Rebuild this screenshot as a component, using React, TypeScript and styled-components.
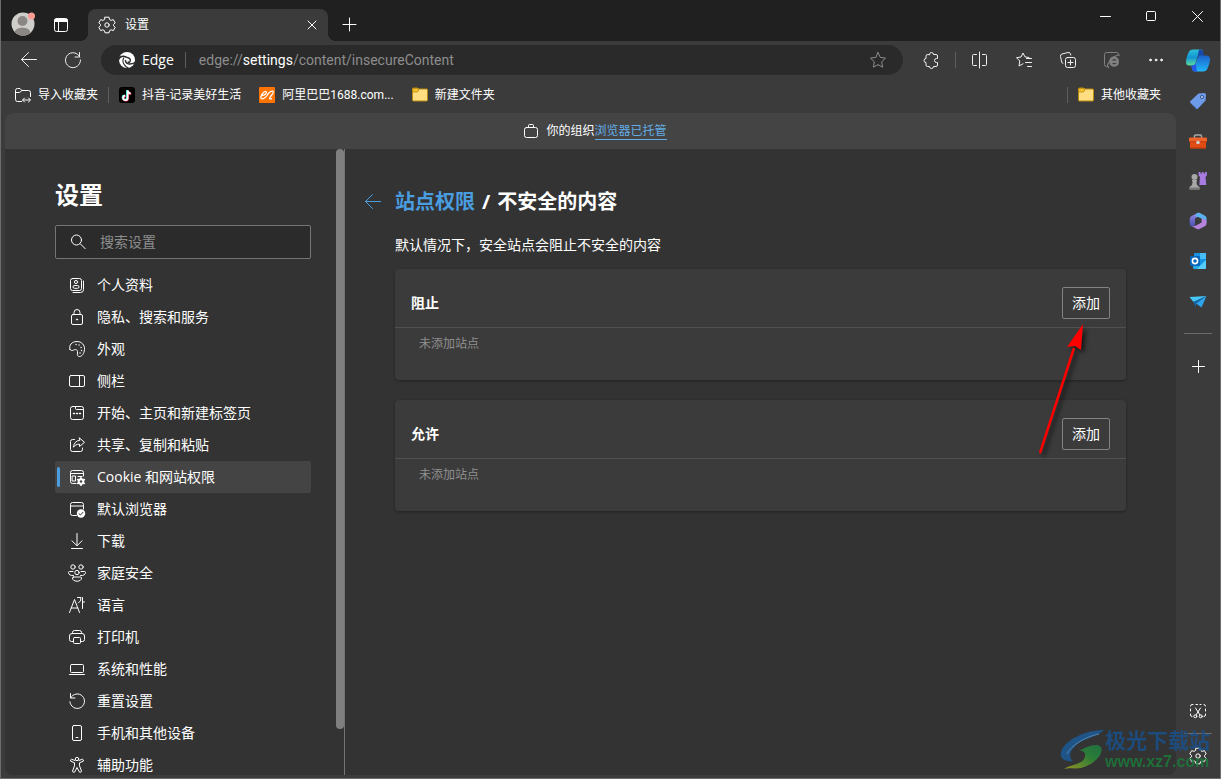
import React from "react";
import styled, { createGlobalStyle, css } from "styled-components";

const GlobalStyle = createGlobalStyle`
  *, *::before, *::after { box-sizing: border-box; }
  body {
    margin: 0;
    background: #202020;
    color: #fff;
    font-family: "Open Sans", "Noto Sans CJK SC", sans-serif;
    font-size: 14px;
    line-height: 20px;
  }
  button, input { font: inherit; color: inherit; }
  button { background: none; border: 0; padding: 0; cursor: pointer; }
  a { color: inherit; text-decoration: none; }
`;

/* ---------- window frame ---------- */

const Window = styled.div`
  position: relative;
  display: flex;
  flex-direction: column;
  height: 100vh;
  border: solid #6c6c6c;
  border-width: 0 1px 1px;
  background: #3b3b3b;
  overflow: hidden;
`;

const TitleBar = styled.header`
  display: flex;
  flex: none;
  height: 41px;
  padding-left: 3px;
  background: #202020;
`;

const TitleButton = styled.button`
  display: grid;
  place-items: center;
  width: 38px;
  height: 32px;
  margin-top: 8px;
`;

const Tab = styled.div`
  position: relative;
  display: flex;
  align-items: center;
  width: 240px;
  margin: 9px 2px 0 8px;
  padding: 0 8px 0 10px;
  border-radius: 8px 8px 0 0;
  background: #3b3b3b;
  font-size: 12px;

  &::before,
  &::after {
    content: "";
    position: absolute;
    bottom: 0;
    width: 8px;
    height: 8px;
  }
  &::before {
    right: 100%;
    background: radial-gradient(circle at 0 0, transparent 8px, #3b3b3b 8px);
  }
  &::after {
    left: 100%;
    background: radial-gradient(circle at 100% 0, transparent 8px, #3b3b3b 8px);
  }
`;

const TabTitle = styled.span`
  flex: 1;
  padding-left: 9px;
`;

const TabClose = styled.button`
  display: grid;
  place-items: center;
  width: 16px;
  height: 16px;
`;

const WindowControls = styled.div`
  display: flex;
  margin-left: auto;
`;

const ControlButton = styled.button`
  display: grid;
  place-items: center;
  width: 46px;
  height: 32px;
`;

const Body = styled.div`
  display: flex;
  flex: 1;
  min-height: 0;
`;

const Main = styled.div`
  display: flex;
  flex-direction: column;
  flex: 1;
  min-width: 0;
`;

/* ---------- toolbar ---------- */

const Toolbar = styled.div`
  display: flex;
  align-items: center;
  flex: none;
  gap: 4px;
  height: 38px;
  padding-left: 8px;
`;

const ToolButton = styled.button<{ $dim?: boolean }>`
  display: grid;
  place-items: center;
  flex: none;
  width: 40px;
  height: 32px;
  color: ${(p) => (p.$dim ? "#808080" : "#f0f0f0")};
`;

const Divider = styled.span`
  flex: none;
  width: 1px;
  height: 16px;
  background: #5e5e5e;
`;

const AddressBar = styled.div`
  display: flex;
  align-items: center;
  flex: 1;
  min-width: 0;
  height: 30px;
  margin: 0 4px;
  padding: 0 16px 0 18px;
  border-radius: 15px;
  background: #2a2a2a;
`;

const SiteChip = styled.button`
  display: flex;
  align-items: center;
  gap: 7px;
  margin-right: 11px;
`;

const Url = styled.div`
  flex: 1;
  min-width: 0;
  padding-left: 13px;
  color: #8d8d8d;
  font-family: Roboto, "Noto Sans CJK SC", sans-serif;
  white-space: nowrap;
  outline: none;

  b {
    color: #fff;
    font-weight: 400;
  }
`;

const StarButton = styled.button`
  display: grid;
  color: #8d8d8d;
`;

/* ---------- bookmarks ---------- */

const BookmarkBar = styled.nav`
  display: flex;
  align-items: center;
  flex: none;
  gap: 2px;
  height: 32px;
  margin-bottom: 2px;
  padding: 0 7px 0 6px;
  font-family: Roboto, "Noto Sans CJK SC", sans-serif;
  font-size: 12px;
`;

const Bookmark = styled.a`
  display: flex;
  align-items: center;
  gap: 7px;
  padding: 0 8px;
  white-space: nowrap;
`;

const BookmarkSpacer = styled.span`
  flex: 1;
`;

/* ---------- settings page ---------- */

const Page = styled.div`
  display: flex;
  flex-direction: column;
  flex: 1;
  min-height: 0;
  margin: 0 0 3px 4px;
  border-radius: 8px;
  background: #333;
  overflow: hidden;
`;

const ManagedBar = styled.div`
  display: flex;
  align-items: center;
  justify-content: center;
  flex: none;
  gap: 7px;
  height: 36px;
  padding-left: 9px;
  background: #444;
  font-size: 12px;
`;

const ManagedLink = styled.a`
  border-bottom: 1px solid #63ace5;
  color: #63ace5;
  line-height: 16px;
`;

const ManagedText = styled.span`
  line-height: 16px;
`;

const Columns = styled.div`
  display: flex;
  flex: 1;
  min-height: 0;
`;

const Aside = styled.aside`
  display: flex;
  flex: none;
  width: 340px;
  border-right: 1px solid #757575;
  overflow: hidden;
`;

const AsideContent = styled.div`
  flex: 1;
  padding: 28px 25px 0 50px;
`;

const ScrollThumb = styled.div`
  width: 8px;
  height: calc(100% - 46px);
  border-radius: 4px;
  background: #7f7f7f;
`;

const SettingsTitle = styled.h1`
  margin: 0 0 12px;
  font-size: 24px;
  font-weight: 700;
  line-height: 36px;
`;

const SearchBox = styled.label`
  display: flex;
  align-items: center;
  gap: 14px;
  height: 34px;
  margin-bottom: 10px;
  padding: 0 14px;
  border: 1px solid #757575;
  border-radius: 2px;
  background: #2b2b2b;

  input {
    flex: 1;
    min-width: 0;
    padding: 0;
    border: 0;
    outline: 0;
    background: none;
  }
  input::placeholder {
    color: #8d8d8d;
    opacity: 1;
  }
`;

const NavList = styled.ul`
  margin: 0;
  padding: 0;
  list-style: none;
`;

const NavLink = styled.a<{ $active?: boolean }>`
  position: relative;
  display: flex;
  align-items: center;
  gap: 11px;
  height: 32px;
  padding-left: 13px;
  border-radius: 2px;
  white-space: nowrap;

  ${(p) =>
    p.$active &&
    css`
      background: #444;
      &::before {
        content: "";
        position: absolute;
        left: 2px;
        top: 6px;
        width: 3px;
        height: 20px;
        border-radius: 2px;
        background: #4a9ee0;
      }
    `}
`;

const Section = styled.main`
  position: relative;
  flex: 1;
  min-width: 0;
  padding: 39px 50px 0;
`;

const Heading = styled.div`
  display: flex;
  align-items: center;
  gap: 14px;
  margin-left: -30px;

  h2 {
    display: flex;
    gap: 7px;
    margin: 0;
    font-size: 20px;
    font-weight: 700;
    line-height: 28px;
  }
`;

const BlueLink = styled.a`
  display: inline-flex;
  color: #4a9ee0;
`;

const Description = styled.p`
  margin: 19px 0 14px;
`;

const Card = styled.section`
  height: 111px;
  margin-bottom: 20px;
  border-radius: 4px;
  background: #3b3b3b;
  box-shadow: 0 1px 3px rgba(0, 0, 0, 0.35);
`;

const CardHeader = styled.div`
  display: flex;
  align-items: center;
  justify-content: space-between;
  padding: 18px 16px 8px;
  border-bottom: 1px solid #505050;

  h3 {
    margin: 0;
    font-size: 14px;
    font-weight: 700;
  }
`;

const AddButton = styled.button`
  width: 48px;
  height: 32px;
  border: 1px solid #838383;
  border-radius: 2px;
`;

const EmptyText = styled.p`
  margin: 0;
  padding: 6px 24px;
  color: #909090;
  font-size: 12px;
`;

const Pointer = styled.svg`
  position: absolute;
  top: 171px;
  right: 84px;
  filter: drop-shadow(3px 3px 2px rgba(0, 0, 0, 0.6));
  pointer-events: none;
`;

/* ---------- right sidebar ---------- */

const Rail = styled.nav`
  display: flex;
  flex-direction: column;
  align-items: center;
  flex: none;
  width: 44px;
  padding-bottom: 2px;
`;

const RailButton = styled.button`
  display: grid;
  place-items: center;
  flex: none;
  width: 40px;
  height: 40px;
`;

const RailRule = styled.span<{ $gap: number }>`
  flex: none;
  width: 28px;
  height: 1px;
  margin: ${(p) => p.$gap}px 0;
  background: #6b6b6b;
`;

const RailSpacer = styled.span`
  flex: 1;
`;

const Watermark = styled.div`
  position: absolute;
  right: 10px;
  bottom: 6px;
  display: flex;
  align-items: center;
  opacity: 0.85;
  pointer-events: none;
`;

const WatermarkText = styled.div`
  color: #19508a;
  font-size: 21px;
  font-weight: 700;
  line-height: 24px;

  span {
    display: block;
    color: #1b7a3a;
    font-family: "Liberation Sans", sans-serif;
    font-size: 16px;
    line-height: 20px;
  }
`;

/* ---------- icons ---------- */

type IconProps = { size?: number; children: React.ReactNode };

const Icon = ({ size = 18, children }: IconProps) => (
  <svg
    width={size}
    height={size}
    viewBox={`0 0 ${size} ${size}`}
    fill="none"
    stroke="currentColor"
    strokeLinecap="round"
    strokeLinejoin="round"
    aria-hidden="true"
  >
    {children}
  </svg>
);

const GearIcon = () => (
  <Icon>
    <path d="M7 1.200h4l.6 2.400 1.500.8 2.200-.8 1.900 3.300-1.700 1.600v1.200l1.700 1.600-1.900 3.300-2.200-.8-1.500.8-.6 2.200H7l-.6-2.200-1.500-.8-2.200.8-1.900-3.300 1.700-1.600V8.500L.8 6.900l1.900-3.300 2.200.8 1.500-.8z" />
    <circle cx="9" cy="9" r="2.200" />
  </Icon>
);

const BackIcon = () => (
  <Icon>
    <path d="M16.500 8.500H1.500M8.500 1.500l-7 7 7 7" />
  </Icon>
);

const FolderIcon = () => (
  <Icon size={16}>
    <path d="M.5 13V2Q.5 1 1.500 1h4l1 1h8q1 0 1 1v10q0 1-1 1h-13q-1 0-1-1z" fill="#ffdd80" stroke="#b98a10" />
    <path d="M1 1.500h5.500V4L5 5H1z" fill="#f5c22e" stroke="#b98a10" strokeWidth=".8" />
  </Icon>
);

const navItems: { label: string; icon: React.ReactNode; active?: boolean }[] = [
  {
    label: "个人资料",
    icon: (
      <>
        <rect x="2.500" y="2.500" width="11" height="12" rx="2" />
        <path d="M15.500 5v8.500q0 3-3 3H5" />
        <circle cx="8" cy="6" r="1.600" />
        <rect x="5" y="9.500" width="6" height="2.800" rx="1.400" />
      </>
    ),
  },
  {
    label: "隐私、搜索和服务",
    icon: (
      <>
        <rect x="3.500" y="6.500" width="11" height="10" rx="1.500" />
        <path d="M6 6.500V4.500a3 3 0 0 1 6 0v2" />
        <circle cx="9" cy="11.500" r=".6" fill="currentColor" />
      </>
    ),
  },
  {
    label: "外观",
    icon: (
      <>
        <path d="M2 9.500C.5 5 4 1.500 9 1.500c4.500 0 8 3.500 7.500 8-.4 4-2.500 7-5 7-2 0-2.300-1.500-2-3.500.3-2.200-.5-3.500-2-3.500-1.700 0-3.500 2.500-5.500 0z" />
        <path d="M8 4.500h.1M11 5h.1M13 7.500h.1M13.500 10.500h.1M12 13h.1" strokeWidth="1.300" />
      </>
    ),
  },
  {
    label: "侧栏",
    icon: (
      <>
        <rect x="1.500" y="3.500" width="15" height="11" rx="1.500" />
        <path d="M11.500 3.500v11" />
      </>
    ),
  },
  {
    label: "开始、主页和新建标签页",
    icon: (
      <>
        <rect x="2.500" y="2.500" width="13" height="13" rx="2" />
        <path d="M7.500 2.500v2q0 1 1 1h7" />
        <path d="M5.500 9.500h1M8.500 9.500h1M11.500 9.500h1" strokeWidth="1.400" />
      </>
    ),
  },
  {
    label: "共享、复制和粘贴",
    icon: (
      <>
        <path d="M6.500 3.500h-2q-2 0-2 2v8q0 2 2 2h8q2 0 2-2v-1.500" />
        <path d="M11.500 2l5 4.300-5 4.200V8.200c-3 0-4.500.8-6 3 .3-4 2.500-6.500 6-6.900z" />
      </>
    ),
  },
  {
    label: "Cookie 和网站权限",
    active: true,
    icon: (
      <>
        <path d="M8 15.500H4.500q-2 0-2-2v-9q0-2 2-2h9q2 0 2 2V8M2.500 5.500h13M4.500 8h3v5h-3zM10 8.500h4" />
        <circle cx="13" cy="13.500" r="3.300" fill="currentColor" stroke="none" />
        <path d="M13 9.800v7.400M9.800 11.600l6.400 3.800M16.200 11.600l-6.400 3.800" strokeWidth="1.800" />
        <circle cx="13" cy="13.500" r="1.200" fill="#444" stroke="none" />
      </>
    ),
  },
  {
    label: "默认浏览器",
    icon: (
      <>
        <path d="M8.500 15.500h-4q-2 0-2-2v-9q0-2 2-2h9q2 0 2 2V9M2.500 6h13" />
        <circle cx="13" cy="13.500" r="4.200" fill="currentColor" stroke="none" />
        <path d="M11 13.700l1.400 1.300 2.600-2.700" stroke="#333" />
      </>
    ),
  },
  {
    label: "下载",
    icon: <path d="M9 1.500v12M4 8.800l5 5 5-5M3.500 16.500h11" />,
  },
  {
    label: "家庭安全",
    icon: (
      <>
        <circle cx="5" cy="3" r="2.200" />
        <circle cx="13" cy="3" r="2.200" />
        <circle cx="9" cy="8.500" r="2.200" />
        <path d="M5.500 11.500C2.500 12 .5 10.500.5 8.500q0-1 1-1h3.500M12.500 11.500c3 .5 5-1 5-3q0-1-1-1H13M5.500 13h7q1 0 1 1c0 2-1.800 3.200-4.500 3.200s-4.500-1.200-4.500-3.200q0-1 1-1z" />
      </>
    ),
  },
  {
    label: "语言",
    icon: <path d="M1.500 16.500l5-13 5 13M3.200 12h6.600M9.500 1.500h3.500q.2 4-2.500 5.500M14.500 1.500v11M14.500 6h2" />,
  },
  {
    label: "打印机",
    icon: (
      <>
        <path d="M5.500 13.500h-2q-2 0-2-2V8q0-2.500 2.500-2.500h10q2.500 0 2.500 2.500v3.500q0 2-2 2h-2" />
        <path d="M4.500 5.500v-1q0-2 2-2h5q2 0 2 2v1" />
        <rect x="5.500" y="9.500" width="7" height="6" rx="1" />
      </>
    ),
  },
  {
    label: "系统和性能",
    icon: (
      <>
        <rect x="2.500" y="4.500" width="13" height="8" rx="1" />
        <path d="M1.500 14.500h15" />
      </>
    ),
  },
  {
    label: "重置设置",
    icon: <path d="M2.500 1.500v4.500h4.500M2.700 5.800a7.300 7.300 0 1 1-.8 4" />,
  },
  {
    label: "手机和其他设备",
    icon: (
      <>
        <rect x="4.500" y="1.500" width="9" height="15" rx="1.500" />
        <path d="M8 13.500h2" />
      </>
    ),
  },
  {
    label: "辅助功能",
    icon: (
      <>
        <circle cx="9" cy="3" r="1.700" />
        <path d="M7 4.500L3.500 3.200q-1.500.5-.8 2l3.800 1.600v3L4.500 15q.5 2 2 1.200L9 11.500l2.500 4.700q1.500.8 2-1.200l-2-5.200v-3l3.800-1.600q.7-1.500-.8-2L11 4.500" />
      </>
    ),
  },
];

const siteLists = ["阻止", "允许"];

const railApps: { label: string; icon: React.ReactNode }[] = [
  {
    label: "Copilot",
    icon: (
      <svg width="24" height="24" viewBox="0 0 24 24" aria-hidden="true">
        <defs>
          <linearGradient id="cpl" x1="0" y1="0" x2="0" y2="1">
            <stop offset="0" stopColor="#2cc0d8" />
            <stop offset=".5" stopColor="#1194d3" />
            <stop offset="1" stopColor="#5fdc98" />
          </linearGradient>
          <linearGradient id="cpr" x1="0" y1="0" x2="0" y2="1">
            <stop offset="0" stopColor="#1b62ca" />
            <stop offset="1" stopColor="#22b6fa" />
          </linearGradient>
        </defs>
        <path d="M7 .5h8q2 0 2 2l-1 4h-2q-2 0-2.600 2L9.500 14.500q-.8 2-3 2H3.500Q0 16.500 0 13C0 9.500 2 4.500 3 2.500q1-2 4-2z" fill="url(#cpl)" />
        <path d="M13 .5h2q1.500 0 2.200 2.500L18.200 6.500H14q-2 0-2.600 2z" fill="#1747a8" />
        <path d="M17 22.500H9q-2.500 0-3-3l-.7-3h1.200q2.200 0 3-2l2.500-6q.6-2 2.600-2H20q4 0 4 4c0 3.500-2 8-3 10q-1 2-4 2z" fill="url(#cpr)" />
        <path d="M11 22.500H9q-2.500 0-3-3l-.7-3h1.200q2.200 0 3-2z" fill="#2457e6" />
      </svg>
    ),
  },
  {
    label: "购物",
    icon: (
      <svg width="18" height="18" viewBox="0 0 18 18" aria-hidden="true">
        <path d="M9.500 1.500L15 1q2 0 2 2l-.5 5.500L9 16.500q-1 1-2 0L1.500 11q-1-1 0-2z" fill="#6d9bea" />
        <path d="M1.500 11l7 5.800q-.8.4-1.500-.3z" fill="#4577cc" />
        <circle cx="13" cy="5" r="1.500" fill="#dce9ff" stroke="#294b85" />
      </svg>
    ),
  },
  {
    label: "工具",
    icon: (
      <svg width="18" height="18" viewBox="0 0 18 18" aria-hidden="true">
        <path d="M5.500 6V4q0-1 1-1h5q1 0 1 1v2" fill="none" stroke="#a9a9a9" strokeWidth="1.400" />
        <rect y="5.500" width="18" height="4.500" rx="1" fill="#f0642c" />
        <path d="M1 10h16v5.500q0 1-1 1H2q-1 0-1-1z" fill="#e04c14" />
        <path d="M0 9.200h18v1H0zM1 15.500h16v1H1z" fill="#b83a0c" />
        <circle cx="9" cy="10.500" r="1.800" fill="#d0d0d0" />
      </svg>
    ),
  },
  {
    label: "游戏",
    icon: (
      <svg width="18" height="18" viewBox="0 0 18 18" aria-hidden="true">
        <path d="M9.500 0h2v1.500h1.300V0h1.800v1.500h1.300V0h2v3.500L16.500 5l.8 8h-7l.7-8-1.500-1.500z" fill="#a77be0" />
        <circle cx="5.500" cy="5" r="3" fill="#a7a7a7" />
        <path d="M3 8h5v1.500H7.300L8 13l2.500 2v2.500H.5V15L3 13l.7-3.500H3z" fill="#a7a7a7" />
        <path d="M.5 15.500h10v2H.5z" fill="#777" />
      </svg>
    ),
  },
  {
    label: "Microsoft 365",
    icon: (
      <svg width="18" height="18" viewBox="0 0 18 18" aria-hidden="true">
        <defs>
          <linearGradient id="m365" x1="0" y1="0" x2="0" y2="1">
            <stop offset="0" stopColor="#9a8be6" />
            <stop offset="1" stopColor="#4a4fae" />
          </linearGradient>
        </defs>
        <path d="M9.500.5L2.500 4Q.7 5 .7 6.800V12q.3 2.500 3 2.500 2 0 2.300-1V6.500L11 3.500z" fill="url(#m365)" />
        <path d="M7.500 1.500Q9.500.2 11 1l5 2.700q1.500.9 1.500 2.600v4.500L12.500 9V6.500L6 4z" fill="#5bb2ee" />
        <path d="M17.500 9.500v2.200q0 1.500-1.300 2.300L10.500 17q-1.300.7-2.600 0L2.500 14q3 .5 5-.8l5-3V6.700q5 0 5 2.800z" fill="#b583dc" />
        <path d="M6 7l3.200-1.800L12.500 7v3.300L9 12.300 6 10.500z" fill="#3b3b3b" />
      </svg>
    ),
  },
  {
    label: "Outlook",
    icon: (
      <svg width="18" height="18" viewBox="0 0 18 18" aria-hidden="true">
        <rect x="5" y="1" width="12" height="13" rx="1" fill="#1793e6" />
        <path d="M11 1h6v6h-6z" fill="#46bdf6" />
        <path d="M4 9l7 4 6-5v8q0 1-1 1H5q-1 0-1-1z" fill="#28a8ea" />
        <path d="M17 8v8q0 1-1 1H8z" fill="#57cdfb" />
        <rect x="1" y="4" width="10" height="10" rx="1" fill="#0766b8" />
        <circle cx="6" cy="9" r="2.600" fill="none" stroke="#fff" strokeWidth="1.600" />
      </svg>
    ),
  },
  {
    label: "投放",
    icon: (
      <svg width="18" height="18" viewBox="0 0 18 18" aria-hidden="true">
        <path d="M.5 5L17.500 4 4.500 10z" fill="#46c7f6" />
        <path d="M4.500 10l13-6L7 11.500v4.200z" fill="#1267ae" />
        <path d="M7 11.500L17.500 4l-5 11.500z" fill="#2ba5ec" />
      </svg>
    ),
  },
];

/* ---------- app ---------- */

export default function App() {
  return (
    <>
      <GlobalStyle />
      <Window>
        <TitleBar>
          <TitleButton aria-label="个人资料">
            <svg width="24" height="24" viewBox="0 0 24 24" aria-hidden="true">
              <defs>
                <clipPath id="avatar">
                  <circle cx="12" cy="12" r="11.500" />
                </clipPath>
              </defs>
              <circle cx="12" cy="12" r="11.500" fill="#d0cecb" />
              <g clipPath="url(#avatar)" fill="#8b8784">
                <circle cx="11.500" cy="9" r="5" />
                <ellipse cx="11.500" cy="21" rx="8" ry="5.500" />
              </g>
              <circle cx="20.500" cy="4" r="3.500" fill="#ff9d95" />
            </svg>
          </TitleButton>
          <TitleButton aria-label="标签操作菜单">
            <Icon size={16}>
              <rect x="1.500" y="2.500" width="13" height="13" rx="2" />
              <path d="M2 5.500h12M5.500 6v9" />
              <path d="M2.500 4h11" strokeWidth="2.500" />
            </Icon>
          </TitleButton>
          <Tab>
            <GearIcon />
            <TabTitle>设置</TabTitle>
            <TabClose aria-label="关闭标签页">
              <Icon size={10}>
                <path d="M1 1l8 8M9 1L1 9" />
              </Icon>
            </TabClose>
          </Tab>
          <TitleButton aria-label="新建标签页">
            <Icon size={15}>
              <path d="M7.500 1v13M1 7.500h13" />
            </Icon>
          </TitleButton>
          <WindowControls>
            <ControlButton aria-label="最小化">
              <Icon size={11}>
                <path d="M.5 5.500h10" />
              </Icon>
            </ControlButton>
            <ControlButton aria-label="最大化">
              <Icon size={11}>
                <rect x=".5" y=".5" width="9" height="9" rx="1" />
              </Icon>
            </ControlButton>
            <ControlButton aria-label="关闭">
              <Icon size={11}>
                <path d="M.5.5l10 10M10.500.5l-10 10" />
              </Icon>
            </ControlButton>
          </WindowControls>
        </TitleBar>

        <Body>
          <Main>
            <Toolbar>
              <ToolButton aria-label="返回">
                <BackIcon />
              </ToolButton>
              <ToolButton aria-label="刷新">
                <Icon>
                  <path d="M15.500 1.500v4.500H11M15.800 6A7.500 7.500 0 1 0 16.500 9" />
                </Icon>
              </ToolButton>
              <AddressBar>
                <SiteChip>
                  <svg width="16" height="16" viewBox="0 0 16 16" aria-hidden="true">
                    <circle cx="8" cy="8" r="8" fill="#fff" />
                    <g fill="none" stroke="#2a2a2a" strokeLinecap="round">
                      <path d="M-.5 7.500C.5 4 4.500 3.600 7 5" strokeWidth="1.600" />
                      <path d="M4.700 6C2.800 9.500 5 13.500 9 16" strokeWidth="1.200" />
                      <path d="M8 5.500c2.500 0 4 2 3 4.200-.6 1-1.800 1-1.800.2" strokeWidth="1.400" />
                      <path d="M6.500 8.500c0 3.500 4.500 4.700 9.500 2" strokeWidth="1.400" />
                    </g>
                  </svg>
                  Edge
                </SiteChip>
                <Divider />
                <Url role="textbox" aria-label="地址栏" tabIndex={0}>
                  edge://<b>settings</b>/content/insecureContent
                </Url>
                <StarButton aria-label="收藏此页">
                  <Icon>
                    <path d="M9 1.500l2.300 4.900 5.200.7-3.800 3.700.9 5.400L9 13.600l-4.600 2.600.9-5.400L1.500 7.100l5.200-.7z" />
                  </Icon>
                </StarButton>
              </AddressBar>
              <ToolButton aria-label="扩展">
                <Icon>
                  <path d="M7.500 3.500a2 2 0 0 1 4 0h2.500q1.500 0 1.500 1.500v2.500h-1a1.700 1.700 0 0 0 0 4h1V14q0 1.500-1.500 1.500h-2.500a2 2 0 0 1-4 0H5.500Q4 15.500 4 14v-2.500a2 2 0 0 1 0-4V5q0-1.500 1.500-1.500z" />
                </Icon>
              </ToolButton>
              <Divider />
              <ToolButton aria-label="拆分屏幕">
                <Icon>
                  <path d="M8.500 1v16M5.500 3.500h-3q-1 0-1 1v9q0 1 1 1h3M11.500 3.500h3q1 0 1 1v9q0 1-1 1h-3" />
                </Icon>
              </ToolButton>
              <ToolButton aria-label="收藏夹">
                <Icon>
                  <path d="M14 6.500l-4-.6L8 2 6 6l-4.500.7L4.800 10 4 15l4-2.200M11.500 7.500h5M10.500 11.500h6M12.500 15.500h4" />
                </Icon>
              </ToolButton>
              <ToolButton aria-label="集锦">
                <Icon>
                  <rect x="6.500" y="6.500" width="10" height="10" rx="2" />
                  <path d="M11.500 9v5M9 11.500h5M4 12.500q-1-.3-1.300-1.500L1.500 5.500Q1 3.500 3 3l6-1.500q2-.4 2.500 1.500l.3 1" />
                </Icon>
              </ToolButton>
              <ToolButton $dim aria-label="IE 模式">
                <Icon>
                  <path d="M4.500 15.500H3.500q-2 0-2-2v-10q0-2 2-2h10q2 0 2 2" />
                  <path d="M7.500 10.700h7.300c.2-5-7-5.300-7.300-.2-.2 4.700 5.500 5.200 7.100 1.900" strokeWidth="2.400" />
                  <path d="M5.500 16.500C2.500 14 9 4.500 16.500 4" strokeWidth="1.200" />
                </Icon>
              </ToolButton>
              <ToolButton aria-label="设置及其他">
                <Icon>
                  <g fill="currentColor">
                    <circle cx="3.500" cy="9" r=".9" />
                    <circle cx="9" cy="9" r=".9" />
                    <circle cx="14.500" cy="9" r=".9" />
                  </g>
                </Icon>
              </ToolButton>
            </Toolbar>

            <BookmarkBar aria-label="收藏夹栏">
              <Bookmark href="#import">
                <Icon size={16}>
                  <path d="M6.500 14.500h-4q-2 0-2-2v-9q0-2 2-2H5l2 2h6.500q2 0 2 2v4M.5 5.500h4l2.500-2M8 13h7M9.500 11L7.500 13l2 2M13.500 11l2 2-2 2" />
                </Icon>
                导入收藏夹
              </Bookmark>
              <Divider />
              <Bookmark href="#douyin">
                <svg width="16" height="16" viewBox="0 0 16 16" aria-hidden="true">
                  <rect width="16" height="16" rx="3" fill="#000" />
                  <g fill="none" strokeWidth="1.800">
                    <path d="M8 3v7.500a2.200 2.200 0 1 1-2.300-2.200M8 3.500q.5 2.500 3 2.800" stroke="#25f4ee" />
                    <path d="M9 4v7.500A2.200 2.200 0 1 1 6.700 9.300M9 4q.5 2.800 3.200 3" stroke="#fe2c55" />
                    <path d="M8.600 3.400v7.500a2.200 2.200 0 1 1-2.300-2.200M8.600 3.500q.5 2.700 3 3" stroke="#fff" />
                  </g>
                </svg>
                抖音-记录美好生活
              </Bookmark>
              <Bookmark href="#1688">
                <svg width="16" height="16" viewBox="0 0 16 16" aria-hidden="true">
                  <rect width="16" height="16" rx="1" fill="#ff7300" />
                  <path
                    d="M3 8.500C6 8 8 6 7.300 4.700 6 3.500 2.300 7 1.800 10c-.2 3 3.700 2.300 6.200-1.500C9.500 6 12.500 3.300 14 4.300c1.300 1.200-1.300 3.700-2.800 5.700-1.200 1.700-.5 2.500 1.300 1.700"
                    fill="none"
                    stroke="#fff"
                    strokeWidth="1.300"
                    strokeLinecap="round"
                  />
                </svg>
                阿里巴巴1688.com...
              </Bookmark>
              <Bookmark href="#folder">
                <FolderIcon />
                新建文件夹
              </Bookmark>
              <BookmarkSpacer />
              <Divider />
              <Bookmark href="#others">
                <FolderIcon />
                其他收藏夹
              </Bookmark>
            </BookmarkBar>

            <Page>
              <ManagedBar>
                <Icon size={16}>
                  <rect x="1.500" y="4.500" width="13" height="10" rx="2" />
                  <path d="M5.500 4.500v-2q0-1 1-1h3q1 0 1 1v2" />
                </Icon>
                <ManagedText>
                  你的组织<ManagedLink href="#managed">浏览器已托管</ManagedLink>
                </ManagedText>
              </ManagedBar>
              <Columns>
                <Aside>
                  <AsideContent>
                    <SettingsTitle>设置</SettingsTitle>
                    <SearchBox>
                      <Icon size={16}>
                        <circle cx="6.500" cy="6" r="5" />
                        <path d="M10.200 9.700l5 5" />
                      </Icon>
                      <input type="search" placeholder="搜索设置" aria-label="搜索设置" />
                    </SearchBox>
                    <NavList>
                      {navItems.map((item) => (
                        <li key={item.label}>
                          <NavLink
                            href="#settings"
                            $active={item.active}
                            aria-current={item.active ? "page" : undefined}
                          >
                            <Icon>{item.icon}</Icon>
                            {item.label}
                          </NavLink>
                        </li>
                      ))}
                    </NavList>
                  </AsideContent>
                  <ScrollThumb />
                </Aside>

                <Section>
                  <Heading>
                    <BlueLink href="#back" aria-label="返回">
                      <Icon size={16}>
                        <path d="M15.500 7.500H.5M7.500.5l-7 7 7 7" />
                      </Icon>
                    </BlueLink>
                    <h2>
                      <BlueLink href="#permissions">站点权限</BlueLink>
                      <span>/</span>
                      <span>不安全的内容</span>
                    </h2>
                  </Heading>
                  <Description>默认情况下，安全站点会阻止不安全的内容</Description>
                  {siteLists.map((name) => (
                    <Card key={name}>
                      <CardHeader>
                        <h3>{name}</h3>
                        <AddButton>添加</AddButton>
                      </CardHeader>
                      <EmptyText>未添加站点</EmptyText>
                    </Card>
                  ))}
                  <Pointer width="56" height="140" viewBox="0 0 56 140" aria-hidden="true">
                    <path d="M4 133L38 28" stroke="#fe0000" strokeWidth="2.500" />
                    <path d="M47 4l-2 26-6-4-8 1z" fill="#fe0000" />
                  </Pointer>
                </Section>
              </Columns>
            </Page>
          </Main>

          <Rail aria-label="边栏">
            {railApps.map((app) => (
              <RailButton key={app.label} aria-label={app.label}>
                {app.icon}
              </RailButton>
            ))}
            <RailRule $gap={12} />
            <RailButton aria-label="自定义">
              <Icon size={13}>
                <path d="M6.500.5v12M.5 6.500h12" />
              </Icon>
            </RailButton>
            <RailSpacer />
            <RailButton aria-label="屏幕截图">
              <Icon>
                <path d="M3 14.500q-1.500 0-1.500-1.500v-1M1.500 9V7M1.500 4q0-1.500 1.500-1.500h1M7 2.500h1.500M11 2.500h1M15 2.500q1.500 0 1.500 1.500M16.500 7v2M16.500 12v1q0 1.500-1.500 1.500" />
                <path d="M6.500 6l4.500 7M11.500 6L7 13" />
                <circle cx="6.300" cy="14.300" r="1.500" />
                <circle cx="11.700" cy="14.300" r="1.500" />
              </Icon>
            </RailButton>
            <RailRule $gap={2} />
            <RailButton aria-label="边栏设置">
              <GearIcon />
            </RailButton>
          </Rail>
        </Body>

        <Watermark>
          <svg width="46" height="42" viewBox="0 0 46 42" aria-hidden="true">
            <defs>
              <linearGradient id="leaf" x1="0" y1="1" x2="1" y2="0">
                <stop offset="0" stopColor="#a5a51c" />
                <stop offset=".6" stopColor="#2a8a3a" />
                <stop offset="1" stopColor="#1f7a44" />
              </linearGradient>
            </defs>
            <path d="M45 1C28 1 6 10 2 23c-2 7 5 10 12 9-6-5-2-12 6-18C28 9 38 8 45 1z" fill="#1c5a97" />
            <path d="M40 5C28 7 12 16 8 25" fill="none" stroke="#5b93c0" />
            <path d="M5 40c5-4 16-4 20-10 3-5 0-9-5-8 6-4 18-9 22-4 3 6-5 16-17 20-8 3-14 0-20 2z" fill="url(#leaf)" />
          </svg>
          <WatermarkText>
            极光下载站
            <span>www.xz7.com</span>
          </WatermarkText>
        </Watermark>
      </Window>
    </>
  );
}
